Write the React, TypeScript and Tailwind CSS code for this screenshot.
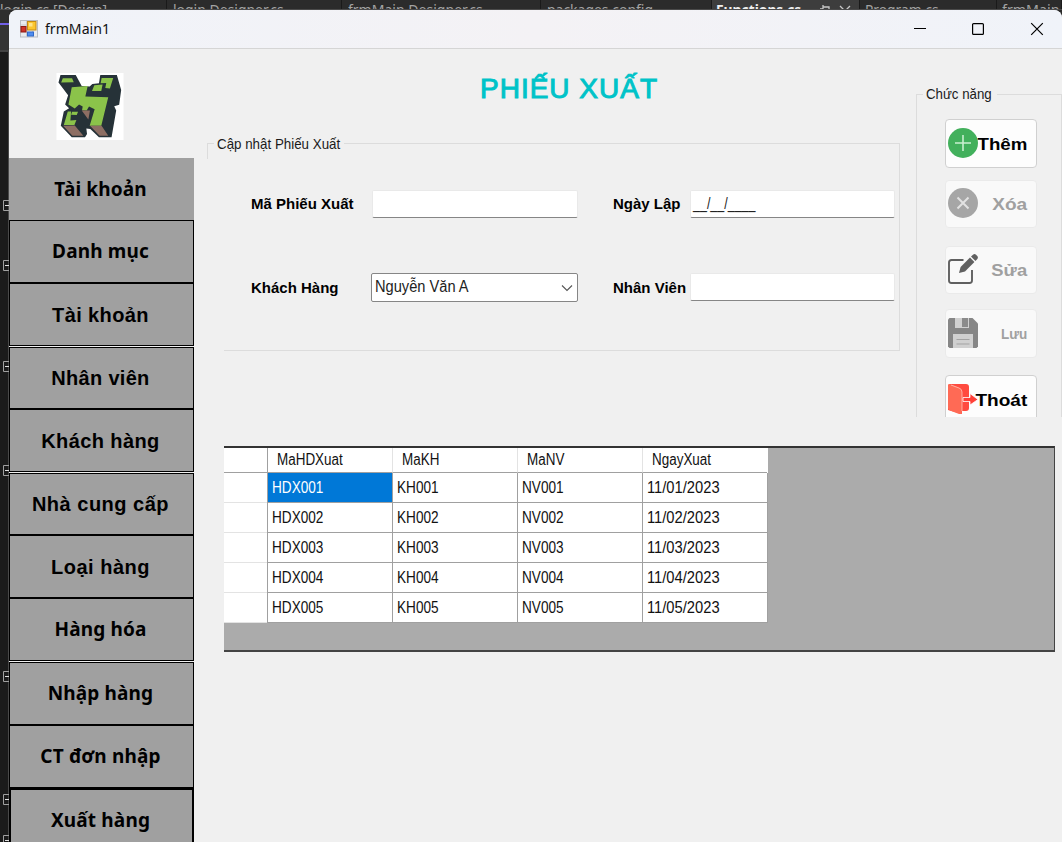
import React from "react";

const sans = "font-['Liberation_Sans',sans-serif]";
const noto = "font-['Noto_Sans',sans-serif]";

const tabs = [
  { text: "login.cs [Design]", box: "w-[167px] pl-0 bg-[#2b2b2b] text-[#a3a3a3]", fit: "scale-x-[0.92]" },
  { text: "login.Designer.cs", box: "w-[175px] pl-[6px] bg-[#2b2b2b] text-[#a3a3a3]", fit: "scale-x-[0.93]" },
  { text: "frmMain.Designer.cs", box: "w-[199px] pl-[6px] bg-[#2b2b2b] text-[#a3a3a3]", fit: "scale-x-[0.935]" },
  { text: "packages.config", box: "w-[171px] pl-[6px] bg-[#2b2b2b] text-[#a3a3a3]", fit: "scale-x-[0.93]" },
  { text: "Functions.cs", box: "w-[148px] pl-[4px] bg-[#3d3d3d] text-[#f0f0f0] font-bold", fit: "scale-x-[0.92]", active: true },
  { text: "Program.cs", box: "w-[137px] pl-[5px] bg-[#2b2b2b] text-[#a3a3a3]", fit: "scale-x-[0.92]" },
  { text: "frmMain.cs", box: "w-[65px] pl-[5px] bg-[#2b2b2b] text-[#a3a3a3]", fit: "scale-x-[0.95]" },
];

function EditorTabs() {
  return (
    <div className="flex h-[10px] shrink-0 overflow-hidden border-b border-[#4a4a4a]">
      {tabs.map((t) => (
        <div key={t.text} className={`relative flex h-[10px] shrink-0 items-start overflow-hidden border-r border-[#1a1a1a] text-[15px] leading-[18px] ${noto} ${t.box}`}>
          <span className={`origin-left whitespace-nowrap ${t.fit}`}>{t.text}</span>
          {t.active && (
            <svg className="absolute left-[106px] top-0" width="40" height="20" viewBox="0 0 40 20" fill="none" stroke="#c8c8c8" strokeWidth="1.3">
              <path d="M2 9h3M5 5v8M5 7h6v5M22 6l10 10M32 6L22 16" />
            </svg>
          )}
        </div>
      ))}
    </div>
  );
}

const folds = [201, 261, 362, 466, 672, 795, 836];

function Gutter() {
  return (
    <svg className="shrink-0" width="9" height="832" viewBox="0 10 9 832">
      <rect x="0" y="10" width="9" height="832" fill="#1b1b1b" />
      <rect x="0" y="10" width="9" height="14" fill="#2e2e2e" />
      <rect x="0" y="23" width="9" height="2" fill="#7160e8" />
      <rect x="0" y="25" width="9" height="25" fill="#343434" />
      <rect x="0" y="50" width="9" height="2" fill="#444" />
      <rect x="8" y="52" width="1" height="790" fill="#4a4a4a" />
      {folds.map((y) => (
        <g key={y} fill="none" stroke="#a0a0a0">
          <path d={`M9 ${y - 0.5}H3.5v10H9`} />
          <path d={`M5 ${y + 4.5}h4`} stroke="#e0e0e0" />
        </g>
      ))}
    </svg>
  );
}

function TitleBar() {
  return (
    <div className="flex h-[39px] shrink-0 items-center border-b border-[#d5d5d5] bg-gradient-to-r from-[#f0f3f9] via-[#f4f2f5] to-[#f0f3f9]">
      <svg className="ml-[11px]" width="18" height="18" viewBox="0 0 18 18">
        <rect x="0.5" y="0.5" width="17" height="16.5" fill="#e9ebee" stroke="#b9bcc2" />
        <path d="M1 5h6M6.500 1v16M12.500 11v6" stroke="#c9ccd1" />
        <rect x="7.500" y="1.500" width="8.500" height="8.500" fill="#fbc62e" stroke="#c48a12" />
        <rect x="9" y="3" width="3.500" height="3.500" fill="#fde48a" />
        <rect x="1" y="6.500" width="5" height="5.500" fill="#cf3328" stroke="#8d1a14" />
        <rect x="7.500" y="12" width="6" height="4" fill="#4f8df0" stroke="#3068c8" />
      </svg>
      <span className={`ml-[7px] origin-left scale-x-[0.94] whitespace-nowrap pb-[2px] text-[15px] leading-[20px] text-[#111] ${noto}`}>frmMain1</span>
      <svg className="ml-auto mr-[17px]" width="131" height="14" viewBox="0 0 131 14" fill="none" stroke="#000" strokeWidth="1.2">
        <path d="M0 6.500h12" />
        <rect x="58.600" y="1.600" width="10.800" height="10.800" rx="1" />
        <path d="M117.200 1.200l11.600 11.600M128.800 1.200l-11.600 11.600" />
      </svg>
    </div>
  );
}

function Logo() {
  return (
    <svg className="ml-[47px] mt-[24px] shrink-0" width="68" height="67" viewBox="170 219 202 202">
      <rect x="170" y="219" width="202" height="202" fill="#fff" />
      <path fill="#263238" d="M182 225H228L246 258 270 260 278 252 298 250 302 225H352L365 270 359 315 344 319 350 332 336 413H298L272 388 260 386 262 403 256 413H216L183 378 192 335 208 325 196 314 205 286 176 248z" />
      <path fill="#8bc34a" d="M189 235H217L222 247 184 248zM216 262L264 258 257 290 326 292 305 378H270L285 328 268 320 261 332 247 331 249 320 238 314 225 326 206 314zM284 256L309 254 305 273H277zM306 234H341L331 266 317 264 320 249 303 250zM204 335H214L212 362 230 361 224 376H192zM217 336H235L231 346 214 345z" />
      <path fill="#8d6e63" d="M246 332L271 332 266 359zM190 378L225 377 251 408H218zM271 378H306L326 408H300z" />
    </svg>
  );
}

const bordered = "border border-black";
const segoe = "text-[19px] tracking-[0.15px] font-bold";
const micro = "text-[20px] font-bold";
const menu = [
  { text: "Tài khoản", box: "h-[62px]", font: `${noto} ${segoe}` },
  { text: "Danh mục", box: `h-[63px] ${bordered}`, font: `${noto} ${segoe}` },
  { text: "Tài khoản", box: `h-[63px] ${bordered}`, font: `${sans} ${micro} tracking-[0.4px]` },
  { text: "Nhân viên", box: `mt-px h-[62px] ${bordered}`, font: `${sans} ${micro} tracking-[0.3px]` },
  { text: "Khách hàng", box: `h-[63px] ${bordered}`, font: `${sans} ${micro} tracking-[0.4px]` },
  { text: "Nhà cung cấp", box: `mt-px h-[62px] ${bordered}`, font: `${sans} ${micro} tracking-[0.5px]` },
  { text: "Loại hàng", box: `h-[63px] ${bordered}`, font: `${sans} ${micro} tracking-[0.5px]` },
  { text: "Hàng hóa", box: `h-[63px] ${bordered}`, font: `${noto} ${segoe}` },
  { text: "Nhập hàng", box: `mt-px h-[63px] ${bordered}`, font: `${noto} ${segoe}` },
  { text: "CT đơn nhập", box: `h-[63px] ${bordered}`, font: `${noto} ${segoe}` },
  { text: "Xuất hàng", box: "h-[64px] border-2 border-black", font: `${noto} ${segoe}` },
];

function Sidebar() {
  return (
    <aside className="flex w-[185px] shrink-0 flex-col overflow-hidden">
      <Logo />
      <nav className="mt-[18px] flex shrink-0 flex-col">
        {menu.map((m, i) => (
          <button key={i} className={`flex shrink-0 items-center justify-center whitespace-nowrap bg-[#a0a0a0] pr-[2px] text-black ${m.box} ${m.font}`}>
            {m.text}
          </button>
        ))}
      </nav>
    </aside>
  );
}

const label = `${sans} shrink-0 whitespace-nowrap text-[15px] font-bold text-black`;
const field = "flex shrink-0 items-center border border-[#e9e9e9] border-b-[#868686] bg-white rounded-[2px]";

function ReceiptForm() {
  return (
    <section className="relative ml-[13px] h-[208px] w-[693px] border-r border-t border-[#dcdcdc] pl-[44px] pt-[46px]">
      <span className="absolute left-0 top-0 h-[15px] w-px bg-[#dcdcdc]" />
      <span className="absolute bottom-0 left-[17px] right-0 h-px bg-[#dcdcdc]" />
      <span className={`absolute left-[7px] top-[-10px] w-[130px] bg-[#f0f0f0] pl-[3px] text-[15px] leading-[20px] text-[#1a1a1a] ${sans}`}>
        <span className="inline-block origin-left scale-x-[0.89] whitespace-nowrap">Cập nhật Phiếu Xuất</span>
      </span>
      <div className="flex h-[28px] items-center">
        <span className={`${label} w-[121px]`}>Mã Phiếu Xuất</span>
        <div className={`${field} h-[28px] w-[206px]`} />
        <span className={`${label} ml-[35px] w-[77px]`}>Ngày Lập</span>
        <div className={`${field} h-[28px] w-[205px] pl-[2px] text-[16px] text-[#222] ${sans}`}>
          <span className="origin-left scale-x-[0.78] whitespace-nowrap">__/__/____</span>
        </div>
      </div>
      <div className="mt-[55px] flex h-[29px] items-center">
        <span className={`${label} w-[120px] pt-px`}>Khách Hàng</span>
        <div className={`flex h-[29px] w-[207px] shrink-0 items-center justify-between rounded-[2px] border border-[#868686] bg-white pl-[3px] pr-[4px] text-[16px] text-[#222] ${sans}`}>
          <span className="origin-left scale-x-[0.915] whitespace-nowrap pb-px">Nguyễn Văn A</span>
          <svg width="12" height="8" viewBox="0 0 12 8" fill="none" stroke="#555" strokeWidth="1.100">
            <path d="M1 1.500l5 5 5-5" />
          </svg>
        </div>
        <span className={`${label} ml-[35px] w-[77px] pt-px`}>Nhân Viên</span>
        <div className={`${field} mb-px h-[28px] w-[205px]`} />
      </div>
    </section>
  );
}

function AddIcon() {
  return (
    <svg width="30" height="30" viewBox="0 0 30 30">
      <circle cx="15" cy="15" r="15" fill="#42b05c" />
      <path d="M15 7v16M7 15h16" stroke="#c9efd0" strokeWidth="1.600" />
    </svg>
  );
}

function RemoveIcon() {
  return (
    <svg width="30" height="30" viewBox="0 0 30 30">
      <circle cx="15" cy="15" r="15" fill="#a6a6a6" />
      <path d="M9.500 9.500l11 11M20.500 9.500l-11 11" stroke="#e2e2e2" strokeWidth="2" />
    </svg>
  );
}

function EditIcon() {
  return (
    <svg width="30" height="30" viewBox="0 0 30 30" fill="none">
      <path d="M15.500 6H3.500Q1 6 1 8.500V26.500Q1 29 3.500 29H21.500Q24 29 24 26.500V16" stroke="#606060" strokeWidth="1.900" />
      <path d="M11 19l1.600-6L22 3.600 26.400 8 17 17.400z" fill="#606060" />
      <path d="M23 2.600L25 .7Q26.500-.5 28 .7L29.300 2Q30.500 3.500 29.300 5L27.400 7z" fill="#606060" />
    </svg>
  );
}

function SaveIcon() {
  return (
    <svg width="30" height="30" viewBox="0 0 30 30">
      <path d="M1.500 0H24.500L30 5.500V28.500L28.500 30H1.500L0 28.500V1.500z" fill="#868686" />
      <path d="M7 0H21V10H7z" fill="#d0d0d0" />
      <path d="M14 0h6v9h-6z" fill="#8b8b8b" />
      <path d="M5 16H25V30H5z" fill="#d0d0d0" />
      <path d="M8.500 21.500h13M8.500 26h13" stroke="#a3a3a3" />
    </svg>
  );
}

function ExitIcon() {
  return (
    <svg width="30" height="30" viewBox="0 0 30 30">
      <path d="M0 1.500Q0 0 2 0H18Q21 0 21 3V24Q21 27 18 27H14V30L0 26z" fill="#ff4b40" />
      <path d="M1.500 0L11 3.500Q14 5 14 8V27.500Q14 31 11 30L2 26.500Q0 25.500 0 24V1.500Q0 0 1.500 0z" fill="#ff6a55" />
      <path d="M3 1L11 4Q14 5 14 8V27" fill="none" stroke="#ffc1b8" strokeWidth=".8" />
      <path d="M15 13.500H22V9.500L30 15.500 22 21V17.500H15z" fill="#ff4038" stroke="#fff" strokeWidth=".8" />
    </svg>
  );
}

const actions = [
  { text: "Thêm", icon: <AddIcon />, box: "h-[49px] bg-[#fdfdfd] border-[#d0d0d0] text-black", size: "text-[17px] font-bold scale-x-[1.1]" },
  { text: "Xóa", icon: <RemoveIcon />, box: "mt-[12px] h-[48px] bg-[#f9f9f9] border-[#eaeaea] text-[#a0a0a0]", size: "text-[17px] font-bold scale-x-[1.12]" },
  { text: "Sửa", icon: <EditIcon />, box: "mt-[18px] h-[48px] bg-[#f9f9f9] border-[#eaeaea] text-[#a0a0a0]", size: "text-[17px] font-bold scale-x-[1.08]" },
  { text: "Lưu", icon: <SaveIcon />, box: "mt-[15px] h-[49px] bg-[#f9f9f9] border-[#eaeaea] text-[#a0a0a0]", size: "text-[15px] font-bold scale-x-[0.9]" },
  { text: "Thoát", icon: <ExitIcon />, box: "mt-[17px] h-[49px] bg-[#fdfdfd] border-[#d0d0d0] text-black", size: "text-[17px] font-bold scale-x-[1.12]" },
];

function Actions() {
  return (
    <section className="relative mt-[45px] h-[323px] w-[146px] shrink-0 border-x border-t border-[#dcdcdc]">
      <span className={`absolute left-[6px] top-[-11px] w-[74px] bg-[#f0f0f0] pl-[3px] text-[15px] leading-[20px] text-[#1a1a1a] ${sans}`}>
        <span className="inline-block origin-left scale-x-[0.885] whitespace-nowrap">Chức năng</span>
      </span>
      <div className="flex h-[322px] flex-col overflow-hidden pl-[28px] pt-[24px]">
        {actions.map((a) => (
          <button key={a.text} className={`flex w-[92px] shrink-0 items-center justify-between rounded-[4px] border pl-[2px] pr-[9px] ${a.box} ${sans}`}>
            <span className="shrink-0 pb-[2px]">{a.icon}</span>
            <span className={`origin-right whitespace-nowrap pt-[2px] ${a.size}`}>{a.text}</span>
          </button>
        ))}
      </div>
    </section>
  );
}

const columns = ["MaHDXuat", "MaKH", "MaNV", "NgayXuat"];
const rows = ["1", "2", "3", "4", "5"].map((n) => [`HDX00${n}`, `KH00${n}`, `NV00${n}`, `11/0${n}/2023`]);

function ReceiptGrid() {
  return (
    <section className={`ml-[30px] mt-[29px] h-[206px] w-[831px] border-b-2 border-r border-t-2 border-b-[#444] border-r-[#444] border-t-[#333] bg-[#ababab] text-[16px] text-[#111] ${sans}`}>
      <div className="flex w-[544px] bg-white">
        <div className="h-[25px] w-[43px] border-b border-[#a0a0a0]" />
        {columns.map((c, i) => (
          <div key={c} className={`flex h-[25px] w-[125px] items-center border-b border-l border-b-[#a0a0a0] pl-[9px] ${i === 0 ? "border-l-[#a0a0a0]" : "border-l-[#e3e3e3]"}`}>
            <span className="origin-left scale-x-[0.84]">{c}</span>
          </div>
        ))}
      </div>
      {rows.map((r, ri) => (
        <div key={r[0]} className="flex w-[544px]">
          <div className="h-[30px] w-[43px] border-b border-[#e3e3e3] bg-white" />
          {r.map((c, ci) => (
            <div
              key={c}
              className={`flex h-[30px] items-center border-b border-l border-[#a0a0a0] pl-[4px] ${ci === 3 ? "w-[126px] border-r" : "w-[125px]"} ${ri === 0 && ci === 0 ? "bg-[#0078d7] text-white" : "bg-white"}`}
            >
              <span className={`origin-left ${ci === 3 ? "scale-x-[0.92]" : "scale-x-[0.85]"}`}>{c}</span>
            </div>
          ))}
        </div>
      ))}
    </section>
  );
}

export default function App() {
  return (
    <div className="flex h-[842px] w-[1062px] flex-col overflow-hidden bg-[#2b2b2b]">
      <EditorTabs />
      <div className="flex min-h-0 flex-1 overflow-hidden">
        <Gutter />
        <div className="flex min-w-0 flex-1 flex-col overflow-hidden rounded-t-[8px] bg-[#f0f0f0]">
          <TitleBar />
          <div className="flex min-h-0 flex-1">
            <Sidebar />
            <main className="flex w-[868px] shrink-0 flex-col">
              <div className="flex h-[368px]">
                <div className="flex w-[722px] shrink-0 flex-col">
                  <h1 className={`h-[94px] whitespace-nowrap pl-[286px] pt-[19px] text-[28px] leading-[42px] tracking-[1px] text-[#00c3c8] [-webkit-text-stroke:1px_#00c3c8] ${sans}`}>
                    PHIẾU XUẤT
                  </h1>
                  <ReceiptForm />
                </div>
                <Actions />
              </div>
              <ReceiptGrid />
            </main>
          </div>
        </div>
      </div>
    </div>
  );
}
